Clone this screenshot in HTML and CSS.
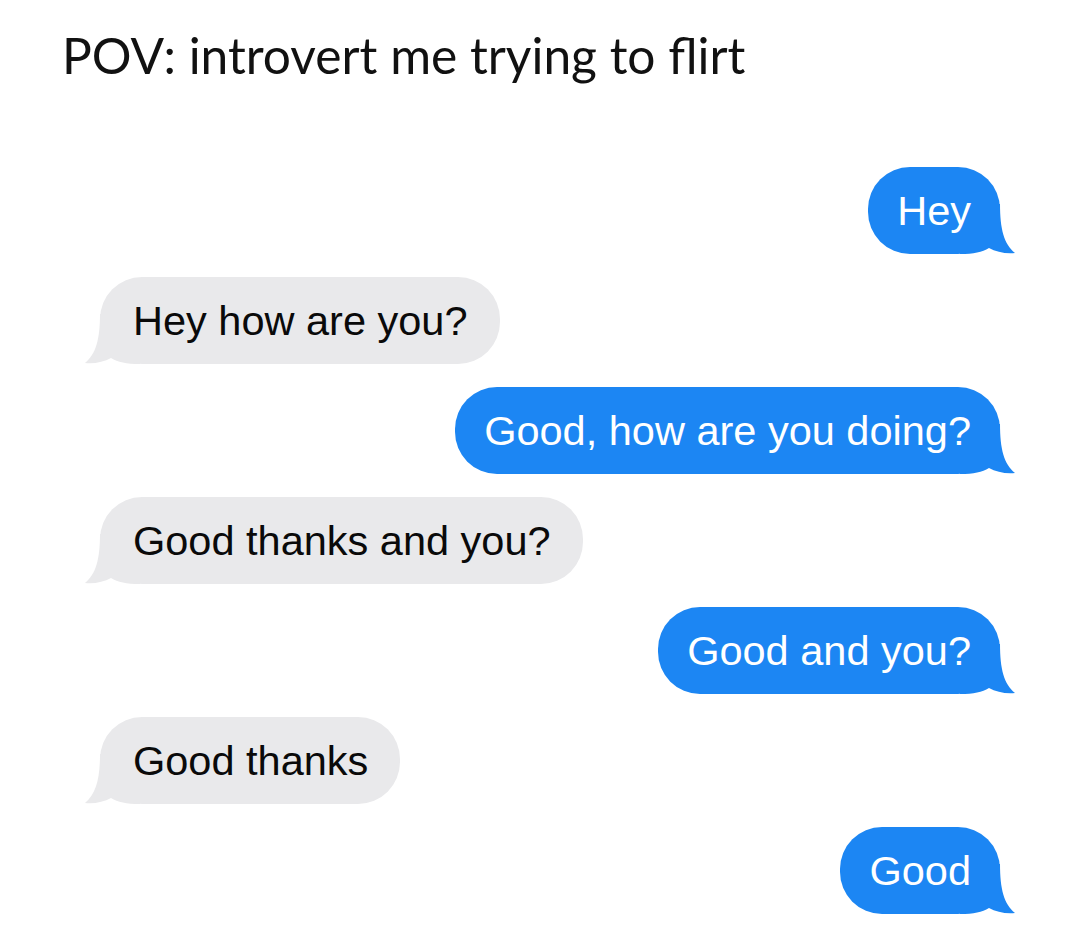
FILE: index.html
```html
<!DOCTYPE html>
<html lang="en">
<head>
<meta charset="utf-8">
<title>POV</title>
<link rel="stylesheet" href="styles.css">
</head>
<body>
<main class="page">
  <h1 class="title">POV: introvert me trying to flirt</h1>
  <section class="chat">
    <div class="msg sent"><svg class="tail" viewBox="0 0 56 50" width="56" height="50"><path d="M0,0 H40 C40,25 44,40 55,49 C46,50 36,48 29,44 C22,48 14,50 0,50 Z"/></svg><span class="text">Hey</span></div>
    <div class="msg recv"><svg class="tail" viewBox="0 0 56 50" width="56" height="50"><path d="M0,0 H40 C40,25 44,40 55,49 C46,50 36,48 29,44 C22,48 14,50 0,50 Z"/></svg><span class="text">Hey how are you?</span></div>
    <div class="msg sent"><svg class="tail" viewBox="0 0 56 50" width="56" height="50"><path d="M0,0 H40 C40,25 44,40 55,49 C46,50 36,48 29,44 C22,48 14,50 0,50 Z"/></svg><span class="text">Good, how are you doing?</span></div>
    <div class="msg recv"><svg class="tail" viewBox="0 0 56 50" width="56" height="50"><path d="M0,0 H40 C40,25 44,40 55,49 C46,50 36,48 29,44 C22,48 14,50 0,50 Z"/></svg><span class="text">Good thanks and you?</span></div>
    <div class="msg sent"><svg class="tail" viewBox="0 0 56 50" width="56" height="50"><path d="M0,0 H40 C40,25 44,40 55,49 C46,50 36,48 29,44 C22,48 14,50 0,50 Z"/></svg><span class="text">Good and you?</span></div>
    <div class="msg recv"><svg class="tail" viewBox="0 0 56 50" width="56" height="50"><path d="M0,0 H40 C40,25 44,40 55,49 C46,50 36,48 29,44 C22,48 14,50 0,50 Z"/></svg><span class="text">Good thanks</span></div>
    <div class="msg sent"><svg class="tail" viewBox="0 0 56 50" width="56" height="50"><path d="M0,0 H40 C40,25 44,40 55,49 C46,50 36,48 29,44 C22,48 14,50 0,50 Z"/></svg><span class="text">Good</span></div>
  </section>
</main>
</body>
</html>
```

FILE: styles.css
```css
html, body {
  margin: 0;
  padding: 0;
  background: #ffffff;
}

.page {
  width: 1080px;
  height: 936px;
  overflow: hidden;
  box-sizing: border-box;
  padding-top: 26px;
}

.title {
  margin: 0 0 0 62px;
  font-family: Lato, "Open Sans", sans-serif;
  font-weight: 400;
  font-size: 49.7px;
  line-height: 58px;
  color: #111111;
  letter-spacing: 0;
}

.chat {
  display: flex;
  flex-direction: column;
  gap: 23px;
  padding: 0 80px 0 100px;
  margin-top: 83px;
}

.msg {
  position: relative;
  height: 87px;
  box-sizing: border-box;
  display: flex;
  align-items: center;
  padding: 0 32px 0 33px;
  border-radius: 42px;
  font-family: "Liberation Sans", Arial, sans-serif;
  font-size: 41.5px;
  white-space: nowrap;
}

.msg .text {
  position: relative;
}

.msg .tail {
  position: absolute;
  bottom: 0;
  overflow: visible;
}

.sent {
  align-self: flex-end;
  background: #1c86f3;
  color: #ffffff;
  fill: #1c86f3;
  padding-left: 29px;
  padding-right: 29px;
}

.sent .tail {
  right: -16px;
}

.recv {
  align-self: flex-start;
  background: #e9e9eb;
  color: #0a0a0a;
  fill: #e9e9eb;
}

.recv .tail {
  left: -16px;
  transform: scaleX(-1);
}
```
